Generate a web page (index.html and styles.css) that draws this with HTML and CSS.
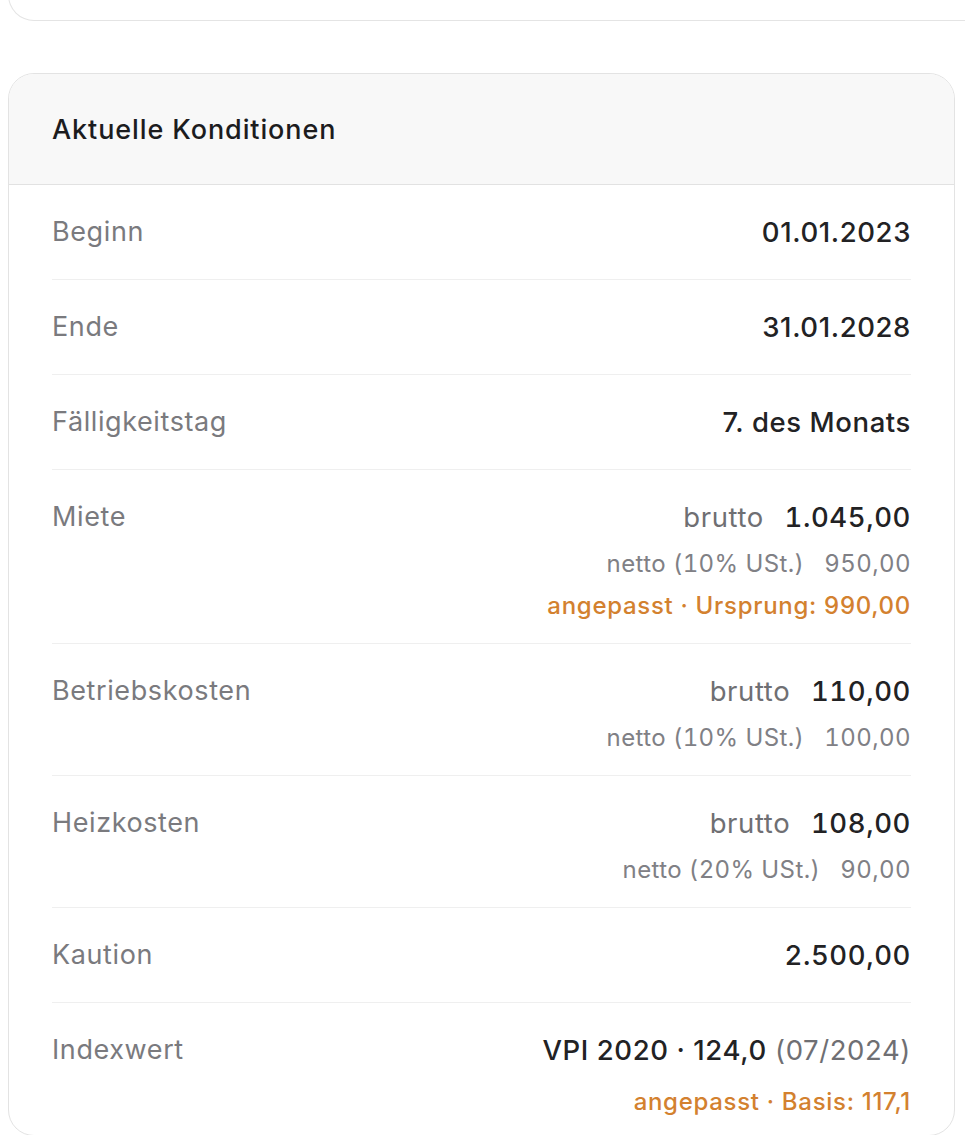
FILE: index.html
```html
<!DOCTYPE html>
<html lang="de">
<head>
<meta charset="utf-8">
<title>Aktuelle Konditionen</title>
<link rel="stylesheet" href="styles.css">
</head>
<body>
<div class="prev-card"></div>
<section class="card">
  <header class="card-head">
    <h2 class="card-title">Aktuelle Konditionen</h2>
  </header>
  <div class="rows">
    <div class="row">
      <div class="label">Beginn</div>
      <div class="val"><div class="main">01.01.2023</div></div>
    </div>
    <div class="row">
      <div class="label">Ende</div>
      <div class="val"><div class="main">31.01.2028</div></div>
    </div>
    <div class="row">
      <div class="label">Fälligkeitstag</div>
      <div class="val"><div class="main">7. des Monats</div></div>
    </div>
    <div class="row">
      <div class="label">Miete</div>
      <div class="val">
        <div class="main"><span class="kind">brutto</span><span class="amount">1.045,00</span></div>
        <div class="sub"><span>netto (10% USt.)</span><span>950,00</span></div>
        <div class="note">angepasst · Ursprung: 990,00</div>
      </div>
    </div>
    <div class="row">
      <div class="label">Betriebskosten</div>
      <div class="val">
        <div class="main"><span class="kind">brutto</span><span class="amount">110,00</span></div>
        <div class="sub"><span>netto (10% USt.)</span><span>100,00</span></div>
      </div>
    </div>
    <div class="row">
      <div class="label">Heizkosten</div>
      <div class="val">
        <div class="main"><span class="kind">brutto</span><span class="amount">108,00</span></div>
        <div class="sub"><span>netto (20% USt.)</span><span>90,00</span></div>
      </div>
    </div>
    <div class="row">
      <div class="label">Kaution</div>
      <div class="val"><div class="main amount">2.500,00</div></div>
    </div>
    <div class="row">
      <div class="label">Indexwert</div>
      <div class="val">
        <div class="main">VPI 2020 · 124,0 <span class="muted">(07/2024)</span></div>
        <div class="note">angepasst · Basis: 117,1</div>
      </div>
    </div>
  </div>
</section>
</body>
</html>
```

FILE: styles.css
```css
html, body {
  margin: 0;
  padding: 0;
  background: #ffffff;
  overflow: hidden;
}
body {
  font-family: Inter, "Noto Sans", "Liberation Sans", sans-serif;
  color: #1d1d1f;
}
.prev-card {
  height: 40px;
  margin: -20px -40px 0 8px;
  border: 1.5px solid #e4e4e4;
  border-top: none;
  border-radius: 0 0 26px 26px;
  background: #fff;
}
.card {
  margin: 52px 10px 0 8px;
  border: 1.5px solid #e3e3e3;
  border-radius: 26px;
  overflow: hidden;
  background: #fff;
}
.card-head {
  height: 110px;
  display: flex;
  align-items: center;
  padding: 0 43px;
  background: #f8f8f8;
  border-bottom: 1.5px solid #e2e2e2;
}
.card-title {
  margin: 0;
  font-size: 27px;
  font-weight: 500;
  color: #1c1c1e;
  letter-spacing: 0.9px;
}
.rows {
  padding: 0 43px;
}
.row {
  display: flex;
  justify-content: space-between;
  align-items: flex-start;
  padding: 22px 0;
  border-bottom: 1px solid #efefef;
}
.row:last-child {
  border-bottom: none;
  padding-bottom: 18px;
}
.label {
  font-size: 27px;
  line-height: 50px;
  letter-spacing: 0.6px;
  color: #7a7a7e;
}
.val {
  display: flex;
  flex-direction: column;
  align-items: flex-end;
}
.main {
  display: flex;
  gap: 0.3em;
  font-size: 27.5px;
  line-height: 50px;
  letter-spacing: 0.6px;
  font-weight: 500;
  color: #222224;
}
.amount {
  font-variant-numeric: tabular-nums;
}
.main .kind, .main .muted {
  font-weight: 400;
  color: #6f6f73;
}
.main .kind {
  margin-right: 0.45em;
}
.sub {
  display: flex;
  gap: 20px;
  margin-top: 7px;
  font-size: 24px;
  line-height: 30px;
  letter-spacing: 0.4px;
  color: #808085;
  font-variant-numeric: tabular-nums;
}
.note {
  margin-top: 12px;
  font-size: 24px;
  line-height: 30px;
  letter-spacing: 0.7px;
  font-weight: 500;
  color: #d3812f;
}
```
